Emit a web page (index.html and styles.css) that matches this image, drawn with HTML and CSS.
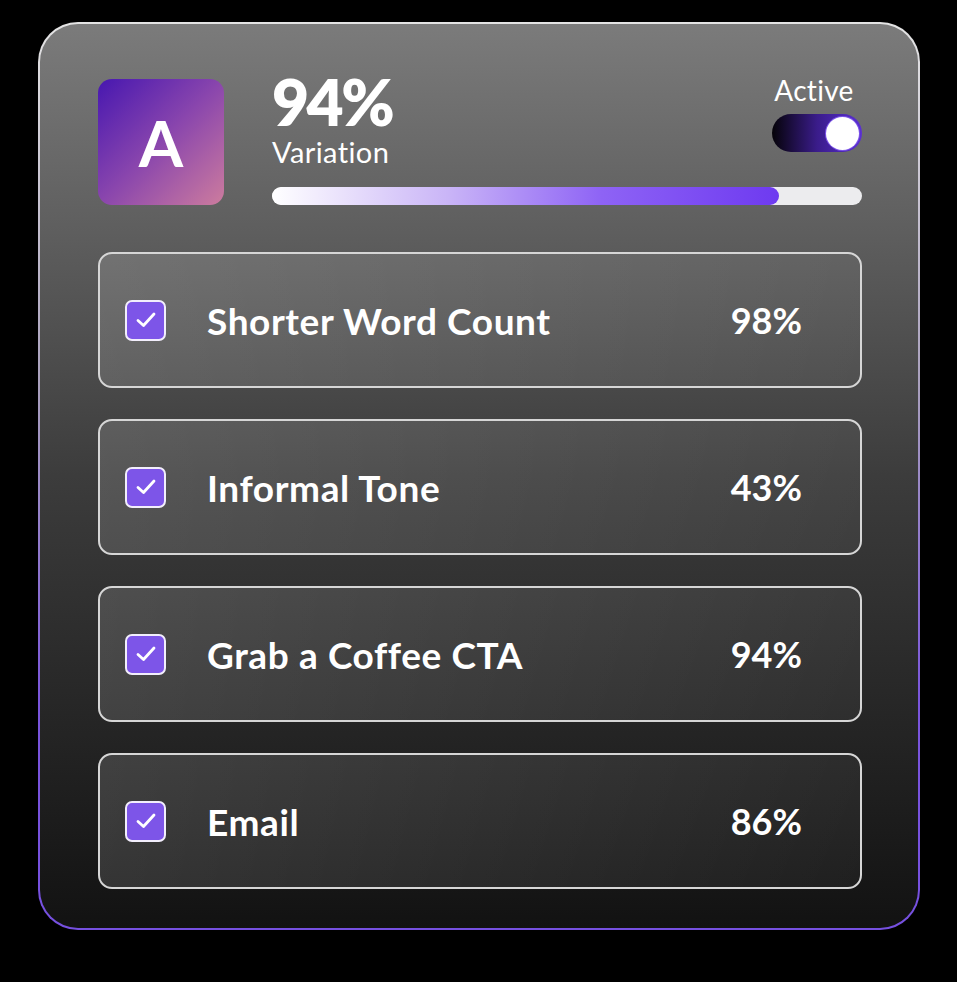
FILE: index.html
```html
<!DOCTYPE html>
<html lang="en">
<head>
    <meta charset="UTF-8">
    <meta name="viewport" content="width=device-width, initial-scale=1.0">
    <title>Variation A</title>
    <link rel="stylesheet" href="styles.css">
</head>
<body>

    <div class="card">
        <div class="head">
            <div class="avatar">A</div>

            <div class="meta">
                <div class="meta-top">
                    <div class="score">
                        <div class="score-value">94%</div>
                        <div class="score-label">Variation</div>
                    </div>
                    <div class="status">
                        <span class="status-label">Active</span>
                        <span class="toggle"><span class="knob"></span></span>
                    </div>
                </div>
                <div class="bar"><div class="bar-fill" style="width: 86%"></div></div>
            </div>
        </div>

        <div class="rows">
            <div class="row">
                <span class="check"><svg viewBox="0 0 24 24" width="24" height="24"><polyline points="4,12.5 9.5,17.5 20,6" /></svg></span>
                <span class="row-label">Shorter Word Count</span>
                <span class="row-value">98%</span>
            </div>
            <div class="row">
                <span class="check"><svg viewBox="0 0 24 24" width="24" height="24"><polyline points="4,12.5 9.5,17.5 20,6" /></svg></span>
                <span class="row-label">Informal Tone</span>
                <span class="row-value">43%</span>
            </div>
            <div class="row">
                <span class="check"><svg viewBox="0 0 24 24" width="24" height="24"><polyline points="4,12.5 9.5,17.5 20,6" /></svg></span>
                <span class="row-label">Grab a Coffee CTA</span>
                <span class="row-value">94%</span>
            </div>
            <div class="row">
                <span class="check"><svg viewBox="0 0 24 24" width="24" height="24"><polyline points="4,12.5 9.5,17.5 20,6" /></svg></span>
                <span class="row-label">Email</span>
                <span class="row-value">86%</span>
            </div>
        </div>
    </div>

</body>
</html>
```

FILE: styles.css
```css
body {
    margin: 0;
    background: #000;
    font-family: Lato, "Noto Sans", sans-serif;
    color: #fff;
}

.card {
    box-sizing: border-box;
    width: 882px;
    height: 908px;
    margin: 22px 0 0 38px;
    padding: 55px 56px 0 58px;
    border: 2px solid transparent;
    border-radius: 40px;
    background:
        linear-gradient(180deg, #7b7b7b 0%, #3c3c3c 50%, #121212 100%) padding-box,
        linear-gradient(180deg, #e4e4e4 0%, #a9a0bd 40%, #7a55dc 75%, #7650e0 100%) border-box;
}

/* header */
.head {
    display: flex;
    gap: 48px;
    height: 126px;
}

.avatar {
    width: 126px;
    height: 126px;
    flex-shrink: 0;
    border-radius: 14px;
    background: linear-gradient(135deg, #4717b0 0%, #8a46ad 50%, #cd7c9e 100%);
    display: flex;
    align-items: center;
    justify-content: center;
    font-size: 64px;
    font-weight: 700;
}

.meta {
    flex: 1;
    display: flex;
    flex-direction: column;
}

.meta-top {
    display: flex;
    justify-content: space-between;
}

.score-value {
    font-size: 64px;
    font-weight: 800;
    line-height: 64px;
    margin-top: -9px;
    letter-spacing: -2.5px;
}

.score-label {
    font-size: 29px;
    line-height: 29px;
    margin-top: 3px;
    letter-spacing: 0.4px;
}

.status {
    display: flex;
    flex-direction: column;
    align-items: center;
}

.status-label {
    font-size: 28px;
    line-height: 30px;
    margin-top: -4px;
    margin-left: -6px;
    letter-spacing: 0.3px;
}

.toggle {
    width: 90px;
    height: 38px;
    margin-top: 9px;
    border-radius: 19px;
    background: linear-gradient(90deg, #050308 0%, #3a1c8a 50%, #5b30d4 100%);
    display: flex;
    align-items: center;
    justify-content: flex-end;
    padding: 0 3px;
    box-sizing: border-box;
}

.knob {
    width: 33px;
    height: 33px;
    border-radius: 50%;
    background: #fff;
    box-shadow: 0 0 0 1px #7b52e8;
}

.bar {
    margin-top: auto;
    height: 18px;
    border-radius: 9px;
    background: #ececee;
    overflow: hidden;
}

.bar-fill {
    height: 100%;
    border-radius: 9px;
    background: linear-gradient(90deg, #ffffff 0%, #c9b4f7 35%, #8e63f5 65%, #6e3af0 100%);
}

/* rows */
.rows {
    display: flex;
    flex-direction: column;
    gap: 31px;
    margin-top: 47px;
}

.row {
    height: 136px;
    box-sizing: border-box;
    display: flex;
    align-items: center;
    padding: 0 58px 0 25px;
    border: 2px solid #d6d6d6;
    border-radius: 14px;
    background: linear-gradient(120deg, rgba(255, 255, 255, 0.14) 0%, rgba(255, 255, 255, 0.04) 100%);
}

.check {
    width: 41px;
    height: 41px;
    box-sizing: border-box;
    flex-shrink: 0;
    border: 2px solid #f2eefc;
    border-radius: 7px;
    background: #7d55e8;
    display: flex;
    align-items: center;
    justify-content: center;
}

.check svg {
    display: block;
    flex-shrink: 0;
}

.check polyline {
    fill: none;
    stroke: #fff;
    stroke-width: 2.8;
    stroke-linecap: round;
    stroke-linejoin: round;
}

.row-label {
    flex: 1;
    margin-left: 41px;
    font-size: 37px;
    font-weight: 700;
    letter-spacing: 0.6px;
}

.row-value {
    font-size: 36px;
    font-weight: 700;
}
```
